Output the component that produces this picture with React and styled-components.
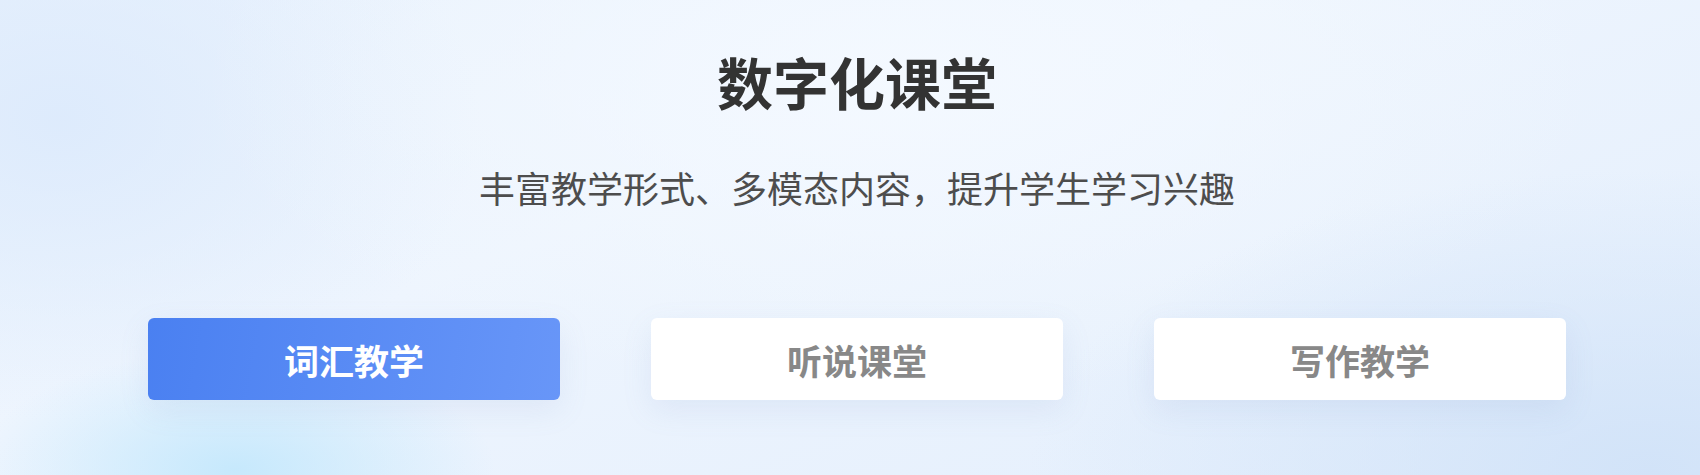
import React, { useState } from "react";
import styled, { createGlobalStyle } from "styled-components";

const GlobalStyle = createGlobalStyle`
  html, body {
    margin: 0;
    padding: 0;
  }
  body {
    font-family: "Noto Sans CJK SC", "Noto Sans", sans-serif;
  }
`;

const Page = styled.div`
  width: 100%;
  height: 475px;
  overflow: hidden;
  box-sizing: border-box;
  padding: 42px 0 0 148px;
  background:
    radial-gradient(ellipse 260px 120px at 235px 470px, rgba(196, 232, 252, 0.95), rgba(196, 232, 252, 0) 100%),
    radial-gradient(ellipse 620px 300px at 1650px 470px, rgba(208, 226, 248, 0.9), rgba(208, 226, 248, 0) 100%),
    radial-gradient(ellipse 700px 320px at 900px 80px, rgba(244, 249, 255, 0.95), rgba(244, 249, 255, 0) 100%),
    radial-gradient(ellipse 420px 300px at 60px 120px, rgba(220, 234, 252, 0.9), rgba(220, 234, 252, 0) 100%),
    linear-gradient(160deg, #e9f2fd 0%, #eef5fe 40%, #e3eefc 100%);
`;

const Content = styled.div`
  width: 1418px;
  display: flex;
  flex-direction: column;
  align-items: center;
`;

const Title = styled.h1`
  margin: 0;
  font-size: 56px;
  line-height: 78px;
  font-weight: 700;
  color: #333333;
`;

const Subtitle = styled.p`
  margin: 42px 0 0;
  font-size: 36px;
  line-height: 50px;
  font-weight: 400;
  color: #4d4d4d;
`;

const Tabs = styled.div`
  margin-top: 106px;
  width: 100%;
  display: flex;
  gap: 91px;
`;

const Tab = styled.button`
  flex: 0 0 412px;
  height: 82px;
  border: none;
  border-radius: 6px;
  cursor: pointer;
  font-family: inherit;
  font-size: 35px;
  font-weight: 700;
  color: ${p => (p.$active ? "#ffffff" : "#888888")};
  background: ${p =>
    p.$active ? "linear-gradient(100deg, #4a80f1 0%, #6896f8 100%)" : "#ffffff"};
  box-shadow: 0 10px 30px rgba(120, 150, 200, 0.12);
`;

const tabs = ["词汇教学", "听说课堂", "写作教学"];

export default function App() {
  const [active, setActive] = useState(0);
  return (
    <Page>
      <GlobalStyle />
      <Content>
        <Title>数字化课堂</Title>
        <Subtitle>丰富教学形式、多模态内容，提升学生学习兴趣</Subtitle>
        <Tabs>
          {tabs.map((t, i) => (
            <Tab key={t} $active={i === active} onClick={() => setActive(i)}>
              {t}
            </Tab>
          ))}
        </Tabs>
      </Content>
    </Page>
  );
}
